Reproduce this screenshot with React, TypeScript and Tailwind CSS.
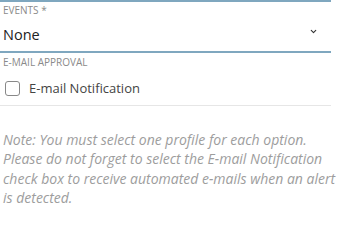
import { ChevronDown } from "lucide-react";

export default function App() {
  return (
    <div className="w-[347px] h-[251px] bg-white font-['Open_Sans',sans-serif] overflow-hidden">
      <div className="w-[331px]">
        <div className="h-[2px] bg-[#7fa7bf]" />
        <div className="pt-[2px] pl-[3px] text-[10px] leading-[12px] text-[#8a8a8a]">EVENTS *</div>
        <div className="flex items-center justify-between h-[37px] border-b-2 border-[#7fa7bf] pl-[3px] pr-[13px]">
          <span className="text-[14.5px] text-[#222] mt-[2px]">None</span>
          <ChevronDown className="w-[9px] h-[9px] text-[#333] -mt-[5px]" strokeWidth={3} />
        </div>
        <div className="pt-[3px] pl-[3px] text-[10px] leading-[12px] text-[#8a8a8a]">E-MAIL APPROVAL</div>
        <label className="flex items-center gap-[9px] h-[38px] pt-[4px] pl-[5px] border-b border-[#e6e6e6]">
          <span className="w-[15px] h-[15px] rounded-[3px] border border-[#888]" />
          <span className="text-[13px] text-[#444]">E-mail Notification</span>
        </label>
      </div>
      <p className="mt-[24px] pl-[3px] w-[340px] italic text-[14px] leading-[19.3px] text-[#9d9d9d]">
        Note: You must select one profile for each option. Please do not forget to select the E-mail Notification check box to receive automated e-mails when an alert is detected.
      </p>
    </div>
  );
}
